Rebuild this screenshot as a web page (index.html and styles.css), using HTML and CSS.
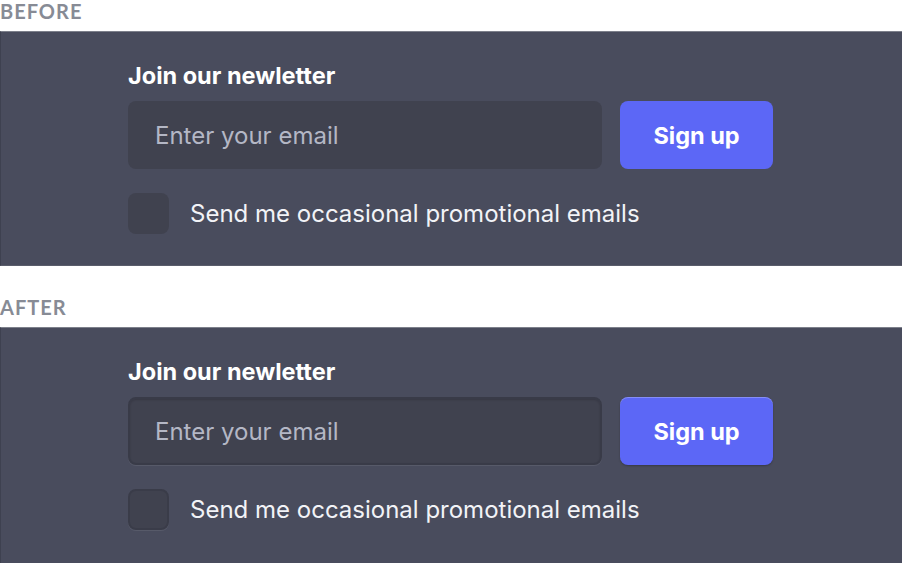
FILE: index.html
```html
<!DOCTYPE html>
<html>
<head>
<meta charset="utf-8">
<link rel="stylesheet" href="styles.css">
</head>
<body>
<div class="label">BEFORE</div>
<div class="panel">
  <div class="form">
    <div class="title">Join our newletter</div>
    <div class="row">
      <div class="input">Enter your email</div>
      <div class="btn">Sign up</div>
    </div>
    <div class="check-row">
      <div class="box"></div>
      <div class="check-label">Send me occasional promotional emails</div>
    </div>
  </div>
</div>
<div class="label label-after">AFTER</div>
<div class="panel after">
  <div class="form">
    <div class="title">Join our newletter</div>
    <div class="row">
      <div class="input">Enter your email</div>
      <div class="btn">Sign up</div>
    </div>
    <div class="check-row">
      <div class="box"></div>
      <div class="check-label">Send me occasional promotional emails</div>
    </div>
  </div>
</div>
</body>
</html>
```
FILE: styles.css
```css
html, body { margin: 0; padding: 0; background: #ffffff; }
body { width: 902px; height: 563px; overflow: hidden; font-family: "Inter", "Noto Sans", sans-serif; }
.label {
  height: 31px;
  box-sizing: border-box;
  font-family: "Lato", sans-serif;
  font-size: 20px;
  line-height: 22px;
  font-weight: 700;
  color: #878b95;
  letter-spacing: 1px;
}
.label-after { margin-top: 30px; }
.panel {
  height: 235px;
  box-sizing: border-box;
  background: #494c5d;
  border-top: 1px solid #7d808b;
  border-left: 1px solid #3e4150;
  border-bottom: 1px solid #5a5d6b;
  padding-left: 127px;
  padding-top: 28px;
}
.panel.after { height: 236px; border-bottom: none; }
.form { width: 646px; }
.title {
  color: #ffffff;
  font-size: 23.5px;
  font-weight: 700;
  line-height: 32px;
  height: 41px;
}
.row { display: flex; gap: 18px; height: 68px; }
.input {
  width: 474px;
  height: 68px;
  box-sizing: border-box;
  background: #40424f;
  border-radius: 8px;
  padding-left: 27px;
  display: flex;
  align-items: center;
  font-size: 24px;
  color: #b4b7c5;
}
.btn {
  width: 153px;
  height: 68px;
  box-sizing: border-box;
  background: #5c67f6;
  border-radius: 8px;
  display: flex;
  align-items: center;
  justify-content: center;
  color: #ffffff;
  font-size: 23.5px;
  font-weight: 700;
}
.check-row { display: flex; align-items: center; gap: 21px; margin-top: 24px; }
.box {
  width: 41px;
  height: 41px;
  box-sizing: border-box;
  background: #40424f;
  border-radius: 8px;
}
.check-label { color: #f2f3f7; font-size: 24px; }
.after .input {
  border: 2px solid #393b48;
  box-shadow: 0 1px 0 rgba(255,255,255,0.08), inset 0 1px 2px rgba(0,0,0,0.15);
  padding-left: 25px;
}
.after .btn {
  box-shadow: inset 0 1px 0 rgba(255,255,255,0.25), 0 1px 2px rgba(0,0,0,0.25);
}
.after .box {
  border: 2px solid #3a3c49;
  box-shadow: 0 1px 0 rgba(255,255,255,0.08);
}
```
